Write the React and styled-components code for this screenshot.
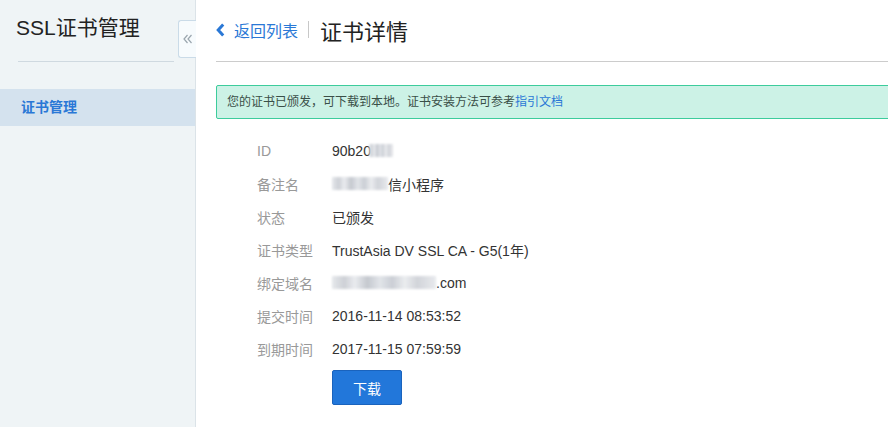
import React from "react";
import styled, { createGlobalStyle } from "styled-components";

const Global = createGlobalStyle`
  html, body { margin: 0; padding: 0; overflow: hidden; background: #fff; }
  body { font-family: "Liberation Sans", "Noto Sans CJK SC", sans-serif; color: #333; }
  * { box-sizing: border-box; }
`;

const Layout = styled.div`
  display: flex;
  min-height: 100vh;
  width: 100%;
`;

const Sidebar = styled.aside`
  position: relative;
  flex: 0 0 196px;
  background: #eff4f6;
  border-right: 1px solid #dbe3e8;
`;

const SideTitle = styled.div`
  margin: 0 21px 0 18px;
  height: 62px;
  padding-top: 14px;
  font-size: 21px;
  line-height: 28px;
  color: #222;
  border-bottom: 1px solid #cfd9e0;
  text-indent: -2px;
`;

const Menu = styled.nav`
  margin-top: 27px;
`;

const MenuItem = styled.div`
  height: 37px;
  line-height: 37px;
  padding-left: 21px;
  font-size: 14px;
  font-weight: ${p => (p.$active ? 700 : 400)};
  color: ${p => (p.$active ? "#2a78d6" : "#333")};
  background: ${p => (p.$active ? "#d4e2ee" : "transparent")};
`;

const Collapse = styled.div`
  position: absolute;
  top: 20px;
  right: -1px;
  width: 18px;
  height: 38px;
  background: #f7fbfd;
  border: 1px solid #cadbe8;
  border-right: none;
  border-radius: 3px 0 0 3px;
  display: flex;
  align-items: center;
  justify-content: center;
`;

const Main = styled.main`
  flex: 0 0 auto;
  width: 720px;
  padding-left: 20px;
`;

const Header = styled.div`
  height: 62px;
  display: flex;
  align-items: center;
  padding-bottom: 2px;
  border-bottom: 1px solid #cccccc;
`;

const Back = styled.a`
  display: flex;
  align-items: center;
  gap: 9px;
  color: #2a78d6;
  font-size: 16px;
  text-decoration: none;
  cursor: pointer;
`;

const Sep = styled.span`
  width: 1px;
  height: 17px;
  background: #c8c8c8;
  margin: 0 11px 0 10px;
`;

const PageTitle = styled.h1`
  margin: 0;
  font-size: 22px;
  font-weight: 400;
  color: #222;
`;

const Alert = styled.div`
  margin-top: 23px;
  height: 34px;
  line-height: 32px;
  padding-left: 10px;
  background: #ccf2e6;
  border: 1px solid #3ccc9c;
  border-radius: 2px;
  font-size: 12px;
  color: #3a4f48;
`;

const Link = styled.a`
  color: #2a78d6;
  text-decoration: none;
`;

const Details = styled.dl`
  margin: 16px 0 0 0;
  padding-left: 41px;
`;

const Row = styled.div`
  display: flex;
  height: 33px;
  align-items: center;
  font-size: 14px;
  padding-bottom: 2px;
`;

const Label = styled.dt`
  width: 75px;
  color: #999;
`;

const Value = styled.dd`
  margin: 0;
  color: #333;
  display: flex;
  align-items: center;
`;

const Blur = styled.span`
  display: inline-block;
  width: ${p => p.$w}px;
  height: 13px;
  margin-left: ${p => p.$ml || 0}px;
  background: linear-gradient(
    90deg,
    #e3e6ea 0%, #c9ccd2 12%, #e8eaee 22%, #bfc3ca 34%, #dfe2e7 46%,
    #c6cad1 58%, #e9ebee 70%, #cdd0d6 82%, #e6e8ec 100%
  );
  filter: blur(1px);
  opacity: 0.9;
`;

const Actions = styled.div`
  padding-left: 116px;
  margin-top: 4px;
`;

const Button = styled.button`
  width: 70px;
  height: 35px;
  background: #2277da;
  border: 1px solid #1a63bd;
  border-radius: 2px;
  color: #fff;
  font-size: 14px;
  font-family: inherit;
  cursor: pointer;
`;

const rows = [
  { label: "ID", value: <>90b20<Blur $w={24} $ml={-2} /></> },
  { label: "备注名", value: <><Blur $w={56} />信小程序</> },
  { label: "状态", value: "已颁发" },
  { label: "证书类型", value: "TrustAsia DV SSL CA - G5(1年)" },
  { label: "绑定域名", value: <><Blur $w={104} />.com</> },
  { label: "提交时间", value: "2016-11-14 08:53:52" },
  { label: "到期时间", value: "2017-11-15 07:59:59" },
];

export default function App() {
  return (
    <>
      <Global />
      <Layout>
        <Sidebar>
          <SideTitle>SSL证书管理</SideTitle>
          <Menu>
            <MenuItem $active>证书管理</MenuItem>
          </Menu>
          <Collapse>
            <svg width="9" height="10" viewBox="0 0 9 10">
              <path d="M4.5 1 L1 5 L4.5 9 M8.5 1 L5 5 L8.5 9" fill="none" stroke="#9aa6ae" strokeWidth="1.2" />
            </svg>
          </Collapse>
        </Sidebar>
        <Main>
          <Header>
            <Back>
              <svg width="9" height="14" viewBox="0 0 9 14">
                <path d="M7.2 1.5 L2.2 7 L7.2 12.5" fill="none" stroke="#2a78d6" strokeWidth="3" />
              </svg>
              返回列表
            </Back>
            <Sep />
            <PageTitle>证书详情</PageTitle>
          </Header>
          <Alert>
            您的证书已颁发，可下载到本地。证书安装方法可参考<Link>指引文档</Link>
          </Alert>
          <Details>
            {rows.map(r => (
              <Row key={r.label}>
                <Label>{r.label}</Label>
                <Value>{r.value}</Value>
              </Row>
            ))}
          </Details>
          <Actions>
            <Button>下载</Button>
          </Actions>
        </Main>
      </Layout>
    </>
  );
}
